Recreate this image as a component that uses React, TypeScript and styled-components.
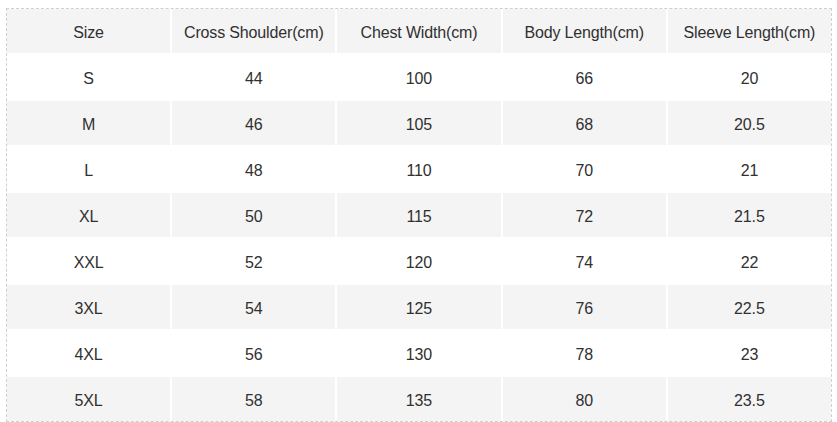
import React from "react";
import styled, { createGlobalStyle } from "styled-components";

const Global = createGlobalStyle`
  html, body { margin: 0; padding: 0; background: #fff; }
  body { font-family: "Liberation Sans", Arial, sans-serif; }
`;

const Page = styled.div`
  padding: 8px 5px 0 6px;
`;

const Table = styled.div`
  border: 1px dashed #cfcfcf;
  display: grid;
  grid-template-columns: repeat(5, 1fr);
  column-gap: 2px;
  row-gap: 2px;
  background: #fff;
`;

const Cell = styled.div<{ $shade: boolean }>`
  height: 44px;
  display: flex;
  align-items: center;
  justify-content: center;
  padding-top: 3px;
  box-sizing: border-box;
  background: ${(p) => (p.$shade ? "#f4f4f4" : "#ffffff")};
  color: #303030;
  font-size: 16px;
  letter-spacing: -0.15px;
`;

const headers = ["Size", "Cross Shoulder(cm)", "Chest Width(cm)", "Body Length(cm)", "Sleeve Length(cm)"];
const rows = [
  ["S", "44", "100", "66", "20"],
  ["M", "46", "105", "68", "20.5"],
  ["L", "48", "110", "70", "21"],
  ["XL", "50", "115", "72", "21.5"],
  ["XXL", "52", "120", "74", "22"],
  ["3XL", "54", "125", "76", "22.5"],
  ["4XL", "56", "130", "78", "23"],
  ["5XL", "58", "135", "80", "23.5"],
];

export default function App() {
  return (
    <>
      <Global />
      <Page>
        <Table>
          {headers.map((h) => (
            <Cell key={h} $shade>
              {h}
            </Cell>
          ))}
          {rows.map((r, i) =>
            r.map((c, j) => (
              <Cell key={`${i}-${j}`} $shade={i % 2 === 1}>
                {c}
              </Cell>
            ))
          )}
        </Table>
      </Page>
    </>
  );
}
